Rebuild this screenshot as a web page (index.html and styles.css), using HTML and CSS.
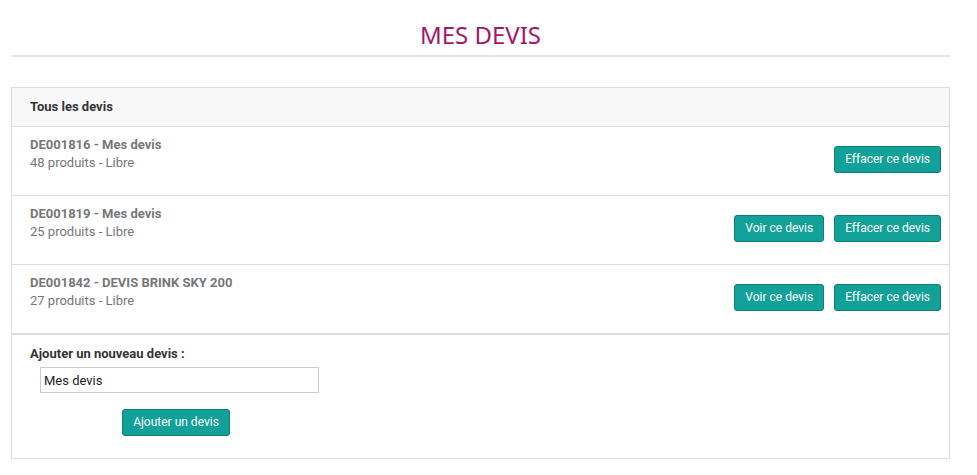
FILE: index.html
```html
<!DOCTYPE html>
<html>
    <head>
        <title>Mes devis</title>
        <link rel="stylesheet" href="styles.css">
    </head>
    <body>
        <main class="page">
            <h1 class="page-title">MES DEVIS</h1>

            <section class="panel">
                <div class="panel-head">Tous les devis</div>

                <div class="quote">
                    <div class="quote-info">
                        <div class="quote-name">DE001816 - Mes devis</div>
                        <div class="quote-meta">48 produits - Libre</div>
                    </div>
                    <div class="quote-actions">
                        <a class="btn" href="#">Effacer ce devis</a>
                    </div>
                </div>

                <div class="quote">
                    <div class="quote-info">
                        <div class="quote-name">DE001819 - Mes devis</div>
                        <div class="quote-meta">25 produits - Libre</div>
                    </div>
                    <div class="quote-actions">
                        <a class="btn" href="#">Voir ce devis</a>
                        <a class="btn" href="#">Effacer ce devis</a>
                    </div>
                </div>

                <div class="quote">
                    <div class="quote-info">
                        <div class="quote-name">DE001842 - DEVIS BRINK SKY 200</div>
                        <div class="quote-meta">27 produits - Libre</div>
                    </div>
                    <div class="quote-actions">
                        <a class="btn" href="#">Voir ce devis</a>
                        <a class="btn" href="#">Effacer ce devis</a>
                    </div>
                </div>

                <form class="new-quote">
                    <label class="new-quote-label" for="quote-name">Ajouter un nouveau devis :</label>
                    <input class="new-quote-input" id="quote-name" type="text" value="Mes devis">
                    <div class="new-quote-submit">
                        <button class="btn" type="button">Ajouter un devis</button>
                    </div>
                </form>
            </section>
        </main>
    </body>
</html>
```

FILE: styles.css
```css
body {
    margin: 0;
    font-family: Roboto, "Liberation Sans", sans-serif;
    color: #333;
    background: #fff;
}
.page {
    padding: 0 27px 0 11px;
}
.page-title {
    margin: 0;
    padding: 21px 0 6px;
    border-bottom: 2px solid #e6e6e6;
    text-align: center;
    font-family: "Noto Sans", sans-serif;
    font-weight: 400;
    font-size: 24px;
    line-height: 28px;
    color: #a3176b;
}
.panel {
    margin-top: 30px;
    border: 1px solid #ddd;
}
.panel-head {
    padding: 0 18px;
    height: 38px;
    line-height: 38px;
    background: #f8f8f8;
    border-bottom: 1px solid #ddd;
    font-size: 13px;
    font-weight: 700;
    color: #333;
}
.quote {
    display: flex;
    align-items: center;
    justify-content: space-between;
    height: 68px;
    padding: 0 8px 0 18px;
    border-bottom: 1px solid #ddd;
}
.quote:last-of-type {
    border-bottom-width: 2px;
}
.quote-info {
    align-self: flex-start;
    padding-top: 9px;
    font-size: 13px;
    line-height: 18px;
    color: #777;
}
.quote-name {
    font-weight: 700;
}
.quote-actions {
    display: flex;
    gap: 10px;
    margin-top: -3px;
}
.btn {
    display: inline-block;
    box-sizing: border-box;
    height: 27px;
    padding: 0 10px;
    line-height: 25px;
    border: 1px solid #0d7e77;
    border-radius: 3px;
    background: #12a198;
    color: #fff;
    font-family: Roboto, "Liberation Sans", sans-serif;
    font-size: 12px;
    text-decoration: none;
    cursor: pointer;
}
.new-quote {
    padding: 11px 18px 22px;
}
.new-quote-label {
    display: block;
    font-size: 13px;
    font-weight: 700;
    line-height: 16px;
    color: #333;
}
.new-quote-input {
    display: block;
    box-sizing: border-box;
    width: 279px;
    height: 26px;
    margin: 5px 0 0 10px;
    padding: 0 3px;
    border: 1px solid #ccc;
    font-family: Roboto, "Liberation Sans", sans-serif;
    font-size: 13px;
    color: #222;
}
.new-quote-submit {
    width: 292px;
    margin-top: 16px;
    text-align: center;
}
```
